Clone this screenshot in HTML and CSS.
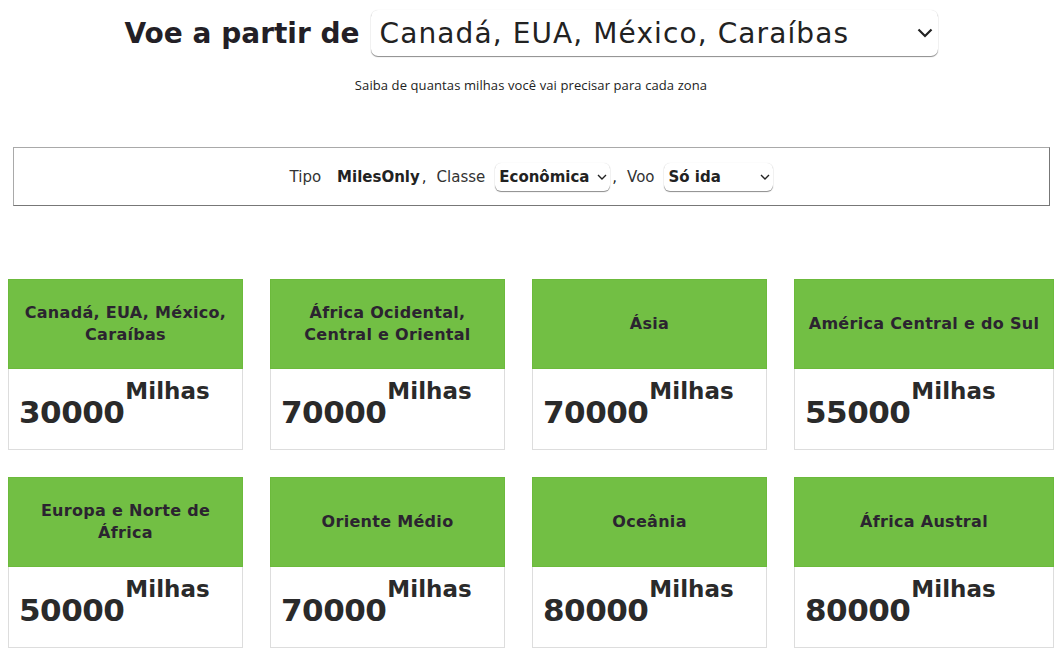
FILE: index.html
```html
<!DOCTYPE html>
<html lang="pt">
<head>
<meta charset="utf-8">
<title>Milhas</title>
<link rel="stylesheet" href="styles.css">
</head>
<body>
<header class="hero">
  <div class="hero-row">
    <h1 class="hero-title">Voe a partir de</h1>
    <div class="big-select">
      <span class="big-select-text">Canadá, EUA, México, Caraíbas</span>
      <svg class="chev-big" width="16" height="10" viewBox="0 0 16 10"><path d="M1.5 1.5 L8 8 L14.5 1.5" fill="none" stroke="#222" stroke-width="2.2"/></svg>
    </div>
  </div>
  <p class="subtitle">Saiba de quantas milhas você vai precisar para cada zona</p>
</header>

<section class="filters">
  <span class="lbl">Tipo</span>
  <span class="val">MilesOnly</span><span class="comma">,</span>
  <span class="lbl">Classe</span>
  <div class="small-select sel-class"><span class="val">Econômica</span><svg class="chev" width="10" height="6" viewBox="0 0 10 6"><path d="M1 1 L5 5 L9 1" fill="none" stroke="#222" stroke-width="1.4"/></svg></div><span class="comma">,</span>
  <span class="lbl">Voo</span>
  <div class="small-select sel-voo"><span class="val">Só ida</span><svg class="chev" width="10" height="6" viewBox="0 0 10 6"><path d="M1 1 L5 5 L9 1" fill="none" stroke="#222" stroke-width="1.4"/></svg></div>
</section>

<section class="grid">
  <div class="card"><div class="card-head">Canadá, EUA, México, Caraíbas</div><div class="card-body"><span class="num">30000</span><span class="unit">Milhas</span></div></div>
  <div class="card"><div class="card-head">África Ocidental, Central e Oriental</div><div class="card-body"><span class="num">70000</span><span class="unit">Milhas</span></div></div>
  <div class="card"><div class="card-head">Ásia</div><div class="card-body"><span class="num">70000</span><span class="unit">Milhas</span></div></div>
  <div class="card"><div class="card-head">América Central e do Sul</div><div class="card-body"><span class="num">55000</span><span class="unit">Milhas</span></div></div>
  <div class="card"><div class="card-head">Europa e Norte de África</div><div class="card-body"><span class="num">50000</span><span class="unit">Milhas</span></div></div>
  <div class="card"><div class="card-head">Oriente Médio</div><div class="card-body"><span class="num">70000</span><span class="unit">Milhas</span></div></div>
  <div class="card"><div class="card-head">Oceânia</div><div class="card-body"><span class="num">80000</span><span class="unit">Milhas</span></div></div>
  <div class="card"><div class="card-head">África Austral</div><div class="card-body"><span class="num">80000</span><span class="unit">Milhas</span></div></div>
</section>
</body>
</html>
```

FILE: styles.css
```css
* { box-sizing: border-box; }
body {
  margin: 8px;
  font-family: "DejaVu Sans", "Open Sans", sans-serif;
  color: #231f26;
  background: #fff;
}
.hero { text-align: center; }
.hero-row {
  display: flex;
  justify-content: center;
  align-items: center;
  gap: 11px;
  padding-top: 2px;
}
.hero-title {
  margin: 0;
  font-size: 28px;
  font-weight: 700;
  color: #231f26;
}
.big-select {
  width: 567px;
  height: 46px;
  border-radius: 7px;
  box-shadow: 0 1px 1px rgba(0,0,0,0.45), 0 0 1px rgba(0,0,0,0.15);
  display: flex;
  align-items: center;
  justify-content: space-between;
  padding: 0 5px 0 9px;
}
.big-select-text {
  font-size: 28px;
  font-weight: 400;
  letter-spacing: 1.1px;
  color: #222;
}
.subtitle {
  margin: 20px 0 0;
  font-family: "Open Sans", "Lato", sans-serif;
  font-size: 13px;
  letter-spacing: 0.1px;
  color: #222;
}
.filters {
  margin: 53px 4px 0 5px;
  height: 59px;
  border: 1px solid #a9a9a9;
  border-right-color: #777;
  border-bottom-color: #777;
  display: flex;
  align-items: center;
  justify-content: center;
  font-size: 15px;
}
.lbl { color: #333; margin: 0 8px 0 0; }
.val { font-weight: 700; color: #222; }
.filters > .val { margin-left: 8px; }
.comma { margin: 0 10px 0 2px; }
.small-select {
  height: 28px;
  border-radius: 6px;
  box-shadow: 0 1px 1px rgba(0,0,0,0.45), 0 0 1px rgba(0,0,0,0.15);
  display: flex;
  align-items: center;
  justify-content: space-between;
  padding: 0 3px 0 4px;
  margin-left: 2px;
}
.sel-class { width: 115px; }
.sel-voo { width: 109px; }
.grid {
  margin-top: 73px;
  display: grid;
  grid-template-columns: 235px 235px 235px 260px;
  column-gap: 27px;
  row-gap: 27px;
}
.card { display: flex; flex-direction: column; }
.card-head {
  height: 90px;
  background: #72bf44;
  border: 1px solid #6cba3c;
  display: flex;
  align-items: center;
  justify-content: center;
  text-align: center;
  font-size: 16px;
  font-weight: 700;
  letter-spacing: 0.3px;
  line-height: 22px;
  padding: 0 10px;
  color: #2b2430;
}
.card-body {
  height: 81px;
  border: 1px solid #ddd;
  border-top: none;
  padding: 9px 0 0 10px;
  color: #2a2a2a;
  font-weight: 700;
  white-space: nowrap;
}
.num { font-size: 31px; line-height: 1; vertical-align: -30px; letter-spacing: -0.5px; }
.unit { font-size: 23px; vertical-align: top; margin-left: 1px; }
```
